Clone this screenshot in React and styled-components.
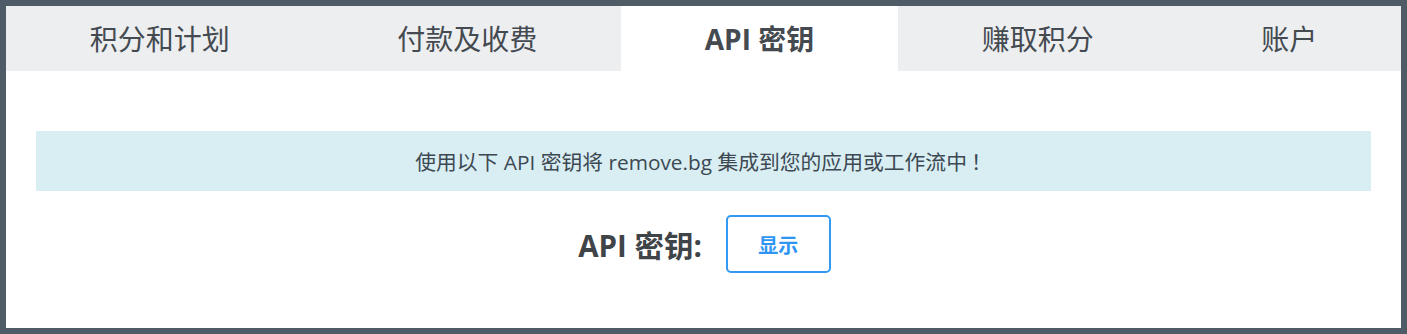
import React from "react";
import styled, { createGlobalStyle } from "styled-components";

const Global = createGlobalStyle`
  html, body { margin: 0; padding: 0; background: #4f5b66; }
  body { font-family: "Open Sans", "Noto Sans CJK SC", sans-serif; }
  * { box-sizing: border-box; }
`;

const Frame = styled.div`
  padding: 6px;
  width: 1407px;
  height: 334px;
  background: #4f5b66;
`;

const Panel = styled.div`
  background: #ffffff;
  display: flex;
  flex-direction: column;
  height: 100%;
`;

const TabBar = styled.nav`
  display: flex;
  height: 65px;
  background: #eceef0;
`;

const Tab = styled.div`
  flex: 1 1 auto;
  display: flex;
  align-items: center;
  justify-content: center;
  font-family: "Open Sans", "Noto Sans CJK SC", sans-serif;
  font-size: 28px;
  font-weight: ${(p) => (p.$active ? 700 : 400)};
  color: #444a50;
  background: ${(p) => (p.$active ? "#ffffff" : "transparent")};
  white-space: nowrap;
  padding-bottom: 2px;
`;

const Content = styled.section`
  flex: 1;
  padding: 60px 30px 0;
  display: flex;
  flex-direction: column;
  align-items: stretch;
`;

const Notice = styled.div`
  height: 60px;
  background: #d8eef3;
  display: flex;
  align-items: center;
  justify-content: center;
  font-size: 20.8px;
  color: #3d4852;
  padding-bottom: 1px;
`;

const Bang = styled.span`
  font-family: "Noto Sans CJK SC", sans-serif;
  padding-left: 4px;
`;

const KeyRow = styled.div`
  margin-top: 24px;
  display: flex;
  align-items: center;
  justify-content: center;
  gap: 24px;
`;

const KeyLabel = styled.span`
  font-size: 29.5px;
  font-weight: 700;
  color: #3f4448;
  padding-left: 2px;
`;

const ShowButton = styled.button`
  width: 105px;
  height: 58px;
  border: 2px solid #3399f3;
  border-radius: 5px;
  background: #ffffff;
  color: #2f95f3;
  font-family: "Open Sans", "Noto Sans CJK SC", sans-serif;
  font-size: 20px;
  font-weight: 700;
  cursor: pointer;
  padding: 0;
`;

const tabs = ["积分和计划", "付款及收费", "API 密钥", "赚取积分", "账户"];

export default function App() {
  return (
    <>
      <Global />
      <Frame>
        <Panel>
          <TabBar>
            {tabs.map((t, i) => (
              <Tab key={t} $active={i === 2}>
                {t}
              </Tab>
            ))}
          </TabBar>
          <Content>
            <Notice>
              使用以下 API 密钥将 remove.bg 集成到您的应用或工作流中<Bang>！</Bang>
            </Notice>
            <KeyRow>
              <KeyLabel>API 密钥:</KeyLabel>
              <ShowButton>显示</ShowButton>
            </KeyRow>
          </Content>
        </Panel>
      </Frame>
    </>
  );
}
